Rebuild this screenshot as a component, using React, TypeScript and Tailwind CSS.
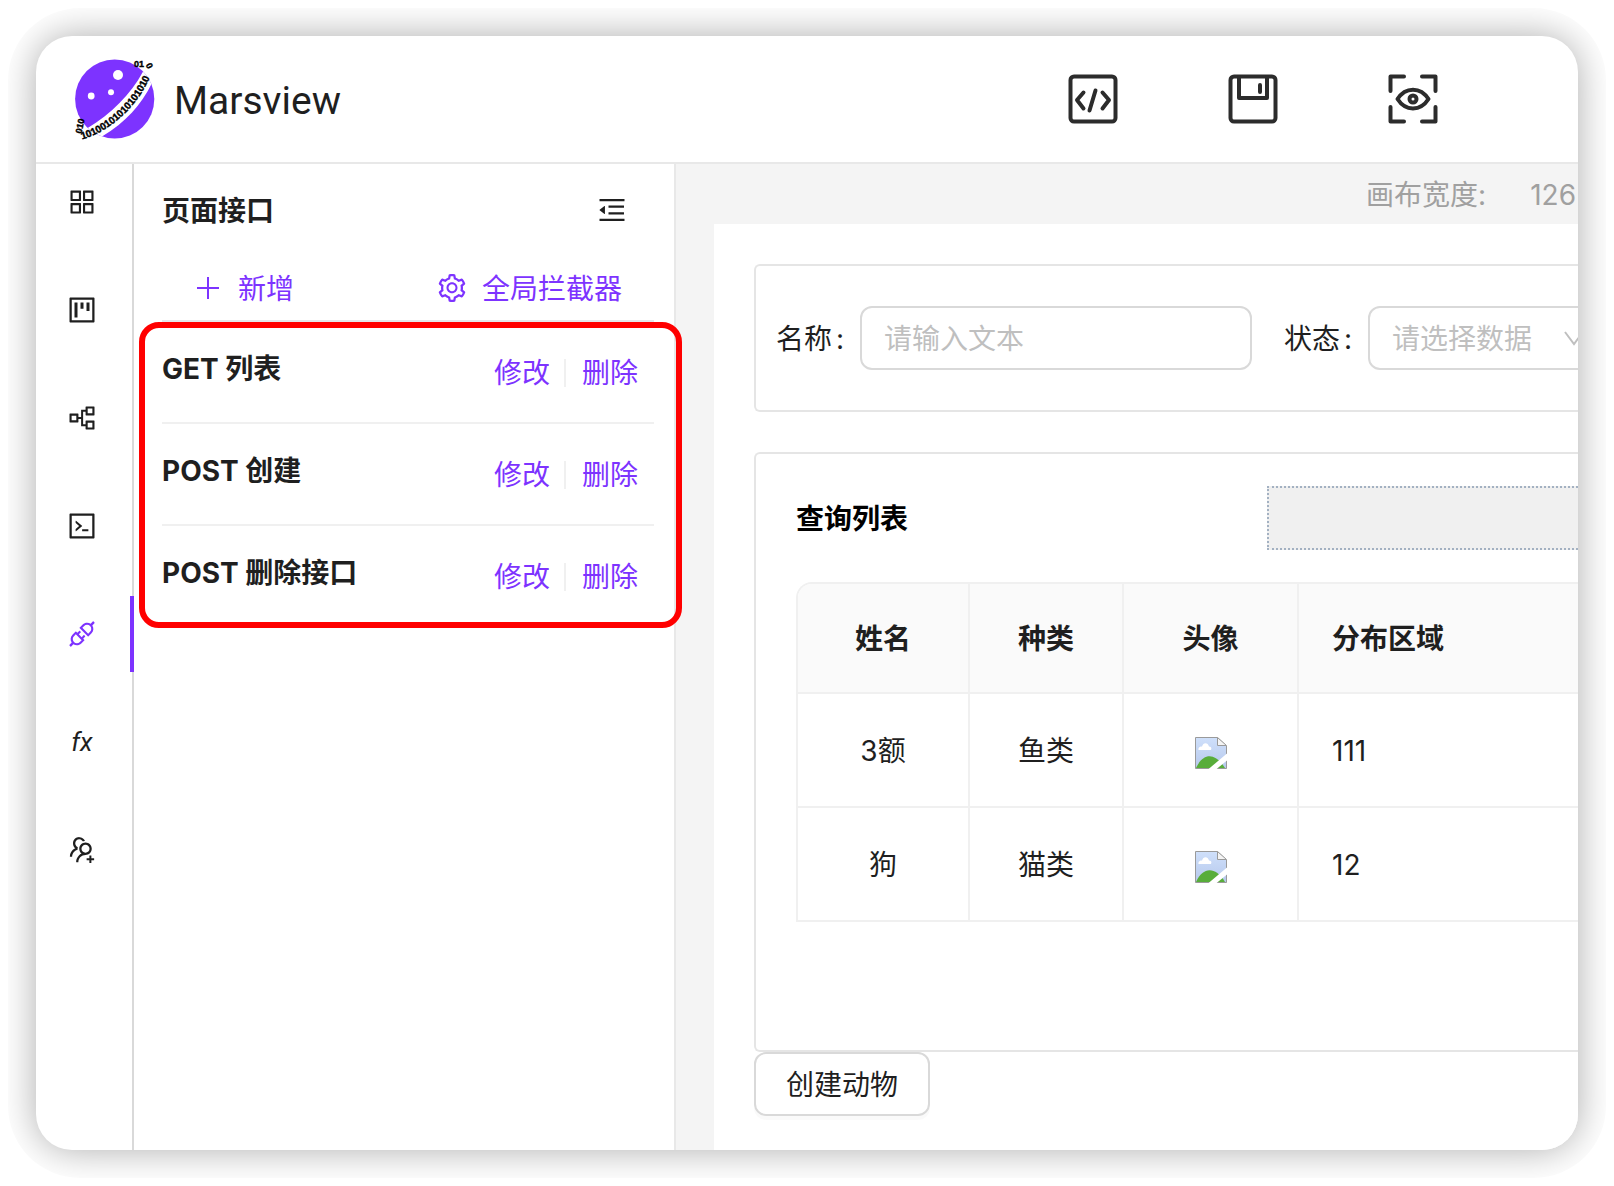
import type { ReactNode } from "react";
import {
  AiOutlineApi,
  AiOutlineAppstore,
  AiOutlineCode,
  AiOutlineMenuFold,
  AiOutlinePartition,
  AiOutlineProject,
  AiOutlineSetting,
  AiOutlineUsergroupAdd,
} from "react-icons/ai";

function Logo() {
  return (
    <svg viewBox="0 -1 96 96" className="size-24 shrink-0" aria-hidden="true">
      <defs>
        <path id="ring" d="M16 87.500 C 45 79.500, 76 51, 86.500 18" />
        <clipPath id="planet">
          <circle cx="48.700" cy="47" r="39.600" />
        </clipPath>
      </defs>
      <circle cx="48.700" cy="47" r="39.600" fill="#7d33ff" />
      <path
        d="M12 82 L21.700 76 C 45 62, 65 42, 76.500 20.500 L 82 8 L 96 8 L 85.500 32 C 75 53, 60 70, 36 84.500 L 20 94 Z"
        fill="#fff"
        clipPath="url(#planet)"
      />
      <circle cx="52" cy="23" r="5" fill="#fff" />
      <circle cx="45" cy="40.300" r="3" fill="#fff" />
      <circle cx="25.200" cy="44" r="3.400" fill="#fff" />
      <g
        fill="#000"
        stroke="#000"
        strokeWidth="0.400"
        fontFamily="'Liberation Sans', sans-serif"
        fontWeight="700"
        fontSize="10"
      >
        <text>
          <textPath href="#ring">10100101010101010</textPath>
        </text>
        <text x="68" y="14.500" fontSize="9">01</text>
        <text transform="translate(79.500 13) rotate(62)" fontSize="9">0</text>
        <text transform="translate(15.500 82) rotate(-78)" fontSize="9">010</text>
      </g>
    </svg>
  );
}

const headerIcon = {
  viewBox: "0 0 50 50",
  fill: "none",
  stroke: "#2c2c2c",
  strokeWidth: 4,
  strokeLinecap: "round" as const,
  strokeLinejoin: "round" as const,
  className: "size-[50px]",
};

function CodeIcon() {
  return (
    <svg {...headerIcon}>
      <rect x="2.500" y="2.500" width="45" height="45" rx="3.500" />
      <path d="M15.500 18.500 9 26l6.500 8.500M34.500 18.500l6.500 7.500-6.500 8.500M27.500 16.500l-6 20" />
    </svg>
  );
}

function SaveIcon() {
  return (
    <svg {...headerIcon}>
      <rect x="2.500" y="2.500" width="45" height="45" rx="3.500" />
      <path d="M11 3v21h28V3M32 11v7" />
    </svg>
  );
}

function PreviewIcon() {
  return (
    <svg {...headerIcon}>
      <path d="M2.500 17V2.500H16M34 2.500h13.500V17M47.500 33v14.500H34M16 47.500H2.500V33" />
      <path d="M9.500 25c8-12.500 23-12.500 31 0-8 12.500-23 12.500-31 0Z" />
      <circle cx="25" cy="25" r="3.500" />
    </svg>
  );
}

function BrokenImage() {
  return (
    <svg viewBox="0 0 32 32" className="mx-auto mt-1 block size-8" role="img" aria-label="头像">
      <defs>
        <linearGradient id="sky" x1="0" y1="0" x2="0" y2="1">
          <stop offset="0" stopColor="#cfe0fb" />
          <stop offset="1" stopColor="#b6c8ec" />
        </linearGradient>
      </defs>
      <path d="M.5.5H22.500L31.500 9V31.500H.5Z" fill="url(#sky)" stroke="#9a9a9a" />
      <path d="M22.500.5V8.500H31.500Z" fill="#f4f4f4" stroke="#9a9a9a" />
      <path d="M3.500 13c-.5-3 2-3.500 3.500-3.500 1-4.500 6-4.500 7 0 2 0 3 1.500 2 3.500Z" fill="#fff" />
      <path d="M1 31C8 16 20 15 30 31Z" fill="#58ad3a" />
      <path d="M13 32.500 32.500 16v7L21 32.500Z" fill="#fff" />
    </svg>
  );
}

function FxIcon() {
  return (
    <span className="font-['Roboto'] text-[26px] leading-8 italic" aria-hidden="true">
      fx
    </span>
  );
}

const tools: { label: string; icon: ReactNode; active?: boolean }[] = [
  { label: "组件", icon: <AiOutlineAppstore /> },
  { label: "模板", icon: <AiOutlineProject /> },
  { label: "大纲", icon: <AiOutlinePartition /> },
  { label: "代码", icon: <AiOutlineCode /> },
  { label: "接口", icon: <AiOutlineApi />, active: true },
  { label: "函数", icon: <FxIcon /> },
  { label: "成员", icon: <AiOutlineUsergroupAdd /> },
];

const apis = ["GET 列表", "POST 创建", "POST 删除接口"];

const animals = [
  { name: "3额", kind: "鱼类", area: "111" },
  { name: "狗", kind: "猫类", area: "12" },
];

function Header() {
  return (
    <header className="flex h-32 shrink-0 items-center border-b-2 border-[#e8e8e8] pr-[140px] pl-[30px]">
      <Logo />
      <h1 className="ml-3 flex-1 pt-1 font-['Roboto'] text-[39px] leading-none">Marsview</h1>
      <div className="flex gap-[110px]">
        <button aria-label="代码">
          <CodeIcon />
        </button>
        <button aria-label="保存">
          <SaveIcon />
        </button>
        <button aria-label="预览">
          <PreviewIcon />
        </button>
      </div>
    </header>
  );
}

function ToolBar() {
  return (
    <nav className="flex w-[98px] shrink-0 flex-col gap-8 border-r-2 border-[#d9d9d9]">
      {tools.map((t) => (
        <button
          key={t.label}
          aria-label={t.label}
          className={
            t.active
              ? "-mr-0.5 flex h-[76px] items-center justify-center border-r-4 border-[#7d33ff] pr-0.5 text-[32px] text-[#7d33ff]"
              : "-mr-0.5 flex h-[76px] items-center justify-center border-r-4 border-transparent pr-0.5 text-[32px]"
          }
        >
          {t.icon}
        </button>
      ))}
    </nav>
  );
}

function ApiPanel() {
  return (
    <aside className="w-[542px] shrink-0 border-r-2 border-[#e8e8e8] pr-5 pl-7">
      <div className="flex h-[92px] items-center justify-between pr-[26px]">
        <h2 className="pt-0.5 font-semibold">页面接口</h2>
        <button aria-label="收起" className="text-[32px]">
          <AiOutlineMenuFold />
        </button>
      </div>
      <div className="flex h-[66px] items-center justify-between border-b-2 border-[#e5e7eb] px-8 text-[#7d33ff]">
        <button className="flex items-center gap-4">
          <svg viewBox="0 0 28 28" className="size-7" stroke="currentColor" strokeWidth="2">
            <path d="M14 3v22M3 14h22" />
          </svg>
          <span className="pt-0.5">新增</span>
        </button>
        <button className="flex items-center gap-3.5">
          <AiOutlineSetting className="size-8" />
          <span className="pt-0.5">全局拦截器</span>
        </button>
      </div>
      <div className="relative">
        <ul className="divide-y-2 divide-[#f0f0f0]">
          {apis.map((a) => (
            <li key={a} className="flex h-[102px] items-start justify-between pt-[25px] pr-4">
              <h3 className="leading-[44px] font-bold">{a}</h3>
              <div className="flex items-center pt-1 leading-[44px] text-[#7d33ff]">
                <button>修改</button>
                <span className="mr-4 ml-3.5 h-7 w-0.5 bg-[#f0f0f0]" />
                <button>删除</button>
              </div>
            </li>
          ))}
        </ul>
        <div className="pointer-events-none absolute inset-y-0 -right-7 -left-[23px] rounded-[20px] border-6 border-[#ff0000]" />
      </div>
    </aside>
  );
}

function SearchForm() {
  return (
    <form className="flex h-[148px] items-center gap-8 overflow-hidden rounded-l-md border-2 border-r-0 border-[#e5e5e5] pl-5">
      <div className="flex shrink-0 items-center">
        <label htmlFor="name" className="w-[84px] pt-0.5">
          名称<span className="ml-1">:</span>
        </label>
        <input
          id="name"
          placeholder="请输入文本"
          className="h-16 w-[392px] rounded-xl border-2 border-[#d9d9d9] px-[22px] pt-0.5 placeholder:text-[#bfbfbf]"
        />
      </div>
      <div className="flex shrink-0 items-center">
        <label htmlFor="status" className="w-[84px] pt-0.5">
          状态<span className="ml-1">:</span>
        </label>
        <div className="relative">
          <select
            id="status"
            className="h-16 w-[232px] appearance-none rounded-xl border-2 border-[#d9d9d9] px-[22px] pt-0.5 text-[#bfbfbf]"
          >
            <option>请选择数据</option>
          </select>
          <svg
            viewBox="0 0 24 24"
            className="pointer-events-none absolute top-5 right-3.5 size-6"
            fill="none"
            stroke="#bfbfbf"
            strokeWidth="2"
          >
            <path d="m3 6 9 12 9-12" />
          </svg>
        </div>
      </div>
    </form>
  );
}

function AnimalTable() {
  return (
    <div className="overflow-hidden rounded-tl-2xl border-2 border-r-0 border-[#f0f0f0]">
      <table className="w-full table-fixed border-separate border-spacing-0">
        <colgroup>
          <col className="w-[172px]" />
          <col className="w-[154px]" />
          <col className="w-[175px]" />
          <col />
        </colgroup>
        <thead className="bg-[#fafafa]">
          <tr className="h-[110px] [&>th]:pt-0.5">
            <th className="border-r-2 border-b-2 border-[#f0f0f0] font-semibold">姓名</th>
            <th className="border-r-2 border-b-2 border-[#f0f0f0] font-semibold">种类</th>
            <th className="border-r-2 border-b-2 border-[#f0f0f0] font-semibold">头像</th>
            <th className="border-b-2 border-[#f0f0f0] pl-[33px] text-left font-semibold">分布区域</th>
          </tr>
        </thead>
        <tbody className="[&>tr:not(:last-child)>td]:border-b-2">
          {animals.map((a) => (
            <tr key={a.name} className="h-[114px] text-center last:h-28 [&>td]:pt-0.5">
              <td className="border-r-2 border-[#f0f0f0]">{a.name}</td>
              <td className="border-r-2 border-[#f0f0f0]">{a.kind}</td>
              <td className="border-r-2 border-[#f0f0f0]">
                <BrokenImage />
              </td>
              <td className="border-[#f0f0f0] pl-[33px] text-left">{a.area}</td>
            </tr>
          ))}
        </tbody>
      </table>
    </div>
  );
}

function Canvas() {
  return (
    <main className="flex min-w-0 flex-1 flex-col bg-[#f4f4f4]">
      <div className="flex h-15 items-center justify-end overflow-hidden pt-0.5 pr-0.5 whitespace-nowrap text-[#a0a0a0]">
        <span className="mr-11">画布宽度:</span>
        <span>126</span>
      </div>
      <div className="ml-[38px] flex-1 bg-white pt-10 pl-10">
        <SearchForm />
        <section className="mt-10 h-[600px] rounded-l-md border-2 border-r-0 border-[#e5e5e5] pt-8 pl-10">
          <div className="mb-8 flex items-center justify-between">
            <h2 className="pt-0.5 font-semibold text-black">查询列表</h2>
            <div className="h-16 w-[311px] border-2 border-r-0 border-dotted border-[#a3b1c2] bg-[#f0f0f0]" />
          </div>
          <AnimalTable />
        </section>
        <button className="h-16 rounded-xl border-2 border-[#d9d9d9] px-[30px] pt-0.5 shadow-[0_4px_0_rgba(0,0,0,0.02)]">
          创建动物
        </button>
      </div>
    </main>
  );
}

export default function App() {
  return (
    <div className="flex min-h-screen bg-white p-2 font-['Inter','Noto_Sans_CJK_SC',sans-serif] text-[28px] leading-[44px] text-[#1f1f1f]">
      <div className="flex min-w-0 flex-1 overflow-hidden rounded-[72px] p-7">
        <div className="flex min-w-0 flex-1 flex-col overflow-hidden rounded-[36px] bg-white shadow-[0_0_38px_rgba(0,0,0,0.33)]">
          <Header />
          <div className="flex min-h-0 flex-1">
            <ToolBar />
            <ApiPanel />
            <Canvas />
          </div>
        </div>
      </div>
    </div>
  );
}
